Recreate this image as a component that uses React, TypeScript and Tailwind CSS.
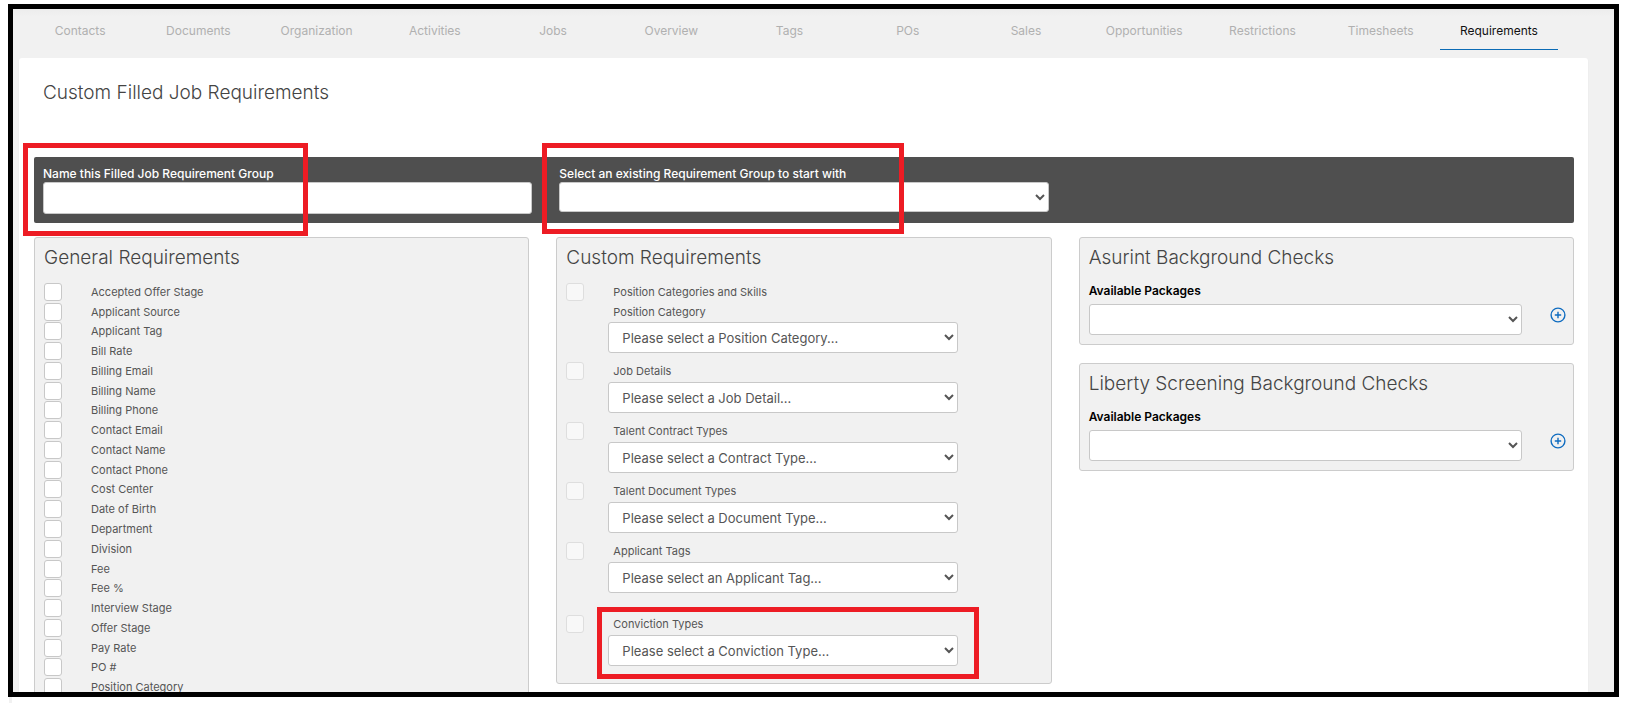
import { useId } from "react";
import type { ReactNode } from "react";

const tabs = [
  "Contacts",
  "Documents",
  "Organization",
  "Activities",
  "Jobs",
  "Overview",
  "Tags",
  "POs",
  "Sales",
  "Opportunities",
  "Restrictions",
  "Timesheets",
  "Requirements",
];

const generalRequirements = [
  "Accepted Offer Stage",
  "Applicant Source",
  "Applicant Tag",
  "Bill Rate",
  "Billing Email",
  "Billing Name",
  "Billing Phone",
  "Contact Email",
  "Contact Name",
  "Contact Phone",
  "Cost Center",
  "Date of Birth",
  "Department",
  "Division",
  "Fee",
  "Fee %",
  "Interview Stage",
  "Offer Stage",
  "Pay Rate",
  "PO #",
  "Position Category",
];

const customRequirements = [
  { label: "Job Details", placeholder: "Please select a Job Detail..." },
  { label: "Talent Contract Types", placeholder: "Please select a Contract Type..." },
  { label: "Talent Document Types", placeholder: "Please select a Document Type..." },
  { label: "Applicant Tags", placeholder: "Please select an Applicant Tag..." },
];

const selectBase =
  "block rounded-[3px] border border-[#c8c8c8] bg-white text-[13px] text-[#555]";

function Panel({ title, className, children }: { title: string; className: string; children: ReactNode }) {
  return (
    <section className={`rounded-[3px] border border-[#ccc] bg-[#f1f1f1] pt-[5px] pl-[9px] ${className}`}>
      <h2 className="text-[19px] leading-[30px] font-light text-[#444]">{title}</h2>
      {children}
    </section>
  );
}

function CheckRow({ label, disabled = false }: { label: string; disabled?: boolean }) {
  return (
    <label className="flex h-full min-h-0 items-center gap-[29px] text-[11px] leading-4 text-[#555]">
      <input
        type="checkbox"
        disabled={disabled}
        className="size-[18px] shrink-0 appearance-none rounded-[3px] border border-[#c8c8c8] bg-white checked:bg-[#0b6bb5] disabled:border-[#dedede] disabled:bg-[#f8f8f8]"
      />
      {label}
    </label>
  );
}

function RequirementSelect({ name, placeholder }: { name: string; placeholder: string }) {
  return (
    <select aria-label={name} className={`${selectBase} ml-[42px] h-[31px] w-[350px] pl-[9px]`}>
      <option>{placeholder}</option>
    </select>
  );
}

function CustomItem({ label, placeholder }: { label: string; placeholder: string }) {
  return (
    <div>
      <div className="mb-px h-5">
        <CheckRow label={label} disabled />
      </div>
      <RequirementSelect name={label} placeholder={placeholder} />
    </div>
  );
}

function PackagePanel({ title }: { title: string }) {
  const id = useId();
  return (
    <Panel title={title} className="pr-[7px] pb-[9px]">
      <label htmlFor={id} className="mt-[10px] block text-[12px] leading-4 font-semibold text-black">
        Available Packages
      </label>
      <div className="mt-[5px] flex gap-7">
        <select id={id} className={`${selectBase} h-[31px] min-w-0 flex-1`} />
        <button type="button" aria-label="Add package" className="mt-[3px] size-4">
          <svg viewBox="0 0 16 16" className="size-4" fill="none" stroke="#0f6cc0">
            <circle cx="8" cy="8" r="6.9" strokeWidth="1.4" />
            <path d="M8 4.8v6.4M4.8 8h6.4" strokeWidth="1.4" />
          </svg>
        </button>
      </div>
    </Panel>
  );
}

export default function App() {
  return (
    <div className="flex h-screen flex-col overflow-hidden bg-white pt-1 font-['Inter',sans-serif]">
      <div className="relative mx-2 min-h-0 flex-1 overflow-hidden border-[5px] border-black bg-[#f1f1f1]">
        <nav className="flex h-[49px] bg-linear-to-b from-[#ececec] to-[#f1f1f1] to-15% pr-14 pl-2">
          {tabs.map((tab) => (
            <a
              key={tab}
              href="#"
              className={
                tab === "Requirements"
                  ? "h-[41px] flex-1 border-b border-[#0b6bb5] pt-3 text-center text-[12px] leading-5 text-[#111]"
                  : "h-[41px] flex-1 pt-3 text-center text-[12px] leading-5 text-[#b0b0b0]"
              }
            >
              {tab}
            </a>
          ))}
        </nav>

        <main className="mr-[26px] ml-[6px] rounded-t-[3px] bg-white pr-[14px] pl-[15px] shadow-[0_1px_1px_rgba(0,0,0,0.12)]">
          <div className="h-[99px] pt-5 pl-[9px]">
            <h1 className="text-[19px] leading-[30px] font-light text-[#444]">Custom Filled Job Requirements</h1>
          </div>

          <div className="grid h-[66px] grid-cols-3 gap-[27px] rounded-[2px] bg-[#4f4f4f] px-[9px] pt-2">
            <label className="block text-[12px] leading-[17px] font-medium text-white">
              Name this Filled Job Requirement Group
              <input
                type="text"
                className="block h-8 w-full rounded-[3px] border border-[#c8c8c8] bg-white px-3 text-[13px] text-[#555]"
              />
            </label>
            <label className="block text-[12px] leading-[17px] font-medium text-white">
              Select an existing Requirement Group to start with
              <select className={`${selectBase} h-[30px] w-full`} />
            </label>
          </div>

          <div className="mt-[14px] grid grid-cols-3 items-start gap-[27px]">
            <Panel title="General Requirements" className="pr-[9px] pb-4">
              <div className="mt-[9px] grid h-[415px] auto-rows-fr">
                {generalRequirements.map((name) => (
                  <CheckRow key={name} label={name} />
                ))}
              </div>
            </Panel>

            <Panel title="Custom Requirements" className="pr-[9px] pb-[17px]">
              <div className="mt-[9px] flex flex-col gap-2">
                <div>
                  <div className="h-5">
                    <CheckRow label="Position Categories and Skills" disabled />
                  </div>
                  <div className="h-5 pl-[47px] text-[11px] leading-5 text-[#555]">Position Category</div>
                  <RequirementSelect
                    name="Position Category"
                    placeholder="Please select a Position Category..."
                  />
                </div>
                {customRequirements.map((item) => (
                  <CustomItem key={item.label} {...item} />
                ))}
                <div className="mt-[13px]">
                  <CustomItem label="Conviction Types" placeholder="Please select a Conviction Type..." />
                </div>
              </div>
            </Panel>

            <div className="grid gap-[18px]">
              <PackagePanel title="Asurint Background Checks" />
              <PackagePanel title="Liberty Screening Background Checks" />
            </div>
          </div>
        </main>

        {/* Highlight frames laid over the form */}
        <div className="pointer-events-none absolute top-[134px] left-[10px] h-[93px] w-[285px] border-[5px] border-[#ed1c24]" />
        <div className="pointer-events-none absolute top-[134px] left-[529px] h-[91px] w-[362px] border-[5px] border-[#ed1c24]" />
        <div className="pointer-events-none absolute top-[598px] left-[584px] h-[72px] w-[382px] border-[5px] border-[#ed1c24]" />
      </div>
      <div className="ml-[9px] h-[6px] w-[3px] bg-[#f1f1f1]" />
    </div>
  );
}
